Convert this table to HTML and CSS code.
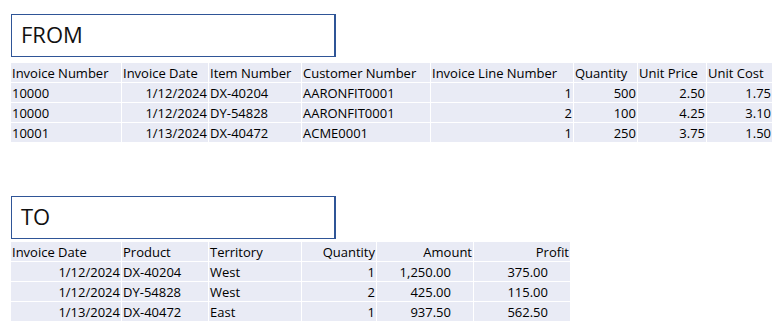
FILE: index.html
```html
<!DOCTYPE html>
<html>
<head>
<meta charset="utf-8">
<link rel="stylesheet" href="styles.css">
</head>
<body>
<div class="page">
  <section class="block block-from">
    <div class="title">FROM</div>
    <div class="grid grid-from">
      <div class="c">Invoice Number</div><div class="c">Invoice Date</div><div class="c">Item Number</div><div class="c">Customer Number</div><div class="c">Invoice Line Number</div><div class="c">Quantity</div><div class="c">Unit Price</div><div class="c">Unit Cost</div>
      <div class="c">10000</div><div class="c r">1/12/2024</div><div class="c">DX-40204</div><div class="c">AARONFIT0001</div><div class="c r">1</div><div class="c r">500</div><div class="c r">2.50</div><div class="c r">1.75</div>
      <div class="c">10000</div><div class="c r">1/12/2024</div><div class="c">DY-54828</div><div class="c">AARONFIT0001</div><div class="c r">2</div><div class="c r">100</div><div class="c r">4.25</div><div class="c r">3.10</div>
      <div class="c">10001</div><div class="c r">1/13/2024</div><div class="c">DX-40472</div><div class="c">ACME0001</div><div class="c r">1</div><div class="c r">250</div><div class="c r">3.75</div><div class="c r">1.50</div>
    </div>
  </section>
  <section class="block block-to">
    <div class="title">TO</div>
    <div class="grid grid-to">
      <div class="c">Invoice Date</div><div class="c">Product</div><div class="c">Territory</div><div class="c r">Quantity</div><div class="c r">Amount</div><div class="c r">Profit</div>
      <div class="c r">1/12/2024</div><div class="c">DX-40204</div><div class="c">West</div><div class="c r">1</div><div class="c r pad">1,250.00</div><div class="c r pad">375.00</div>
      <div class="c r">1/12/2024</div><div class="c">DY-54828</div><div class="c">West</div><div class="c r">2</div><div class="c r pad">425.00</div><div class="c r pad">115.00</div>
      <div class="c r">1/13/2024</div><div class="c">DX-40472</div><div class="c">East</div><div class="c r">1</div><div class="c r pad">937.50</div><div class="c r pad">562.50</div>
    </div>
  </section>
</div>
</body>
</html>
```
FILE: styles.css
```css
html, body {
  margin: 0;
  padding: 0;
  background: #ffffff;
}
body {
  font-family: "Open Sans", "Liberation Sans", sans-serif;
  color: #000000;
}
.page {
  padding: 14px 0 0 11px;
}
.title {
  box-sizing: border-box;
  width: 325px;
  height: 43px;
  border: 1px solid #2f5597;
  border-right-width: 2px;
  padding: 0 0 0 9px;
  font-size: 22px;
  line-height: 39px;
  color: #111111;
}
.block-from .title {
  margin-bottom: 6px;
}
.block-to {
  margin-top: 54px;
}
.block-to .title {
  margin-bottom: 3px;
}
.grid {
  display: grid;
  gap: 1px;
  font-size: 13px;
  line-height: 20px;
}
.grid-from {
  grid-template-columns: 110px 86px 92px 128px 142px 63px 68px 65px;
}
.grid-to {
  grid-template-columns: 110px 86px 92px 74px 96px 96px;
}
.c {
  background: #e9ebf5;
  height: 19px;
  padding: 0 1px 0 1px;
  white-space: nowrap;
  overflow: hidden;
}
.r {
  text-align: right;
}
.pad {
  padding-right: 22px;
}
```
